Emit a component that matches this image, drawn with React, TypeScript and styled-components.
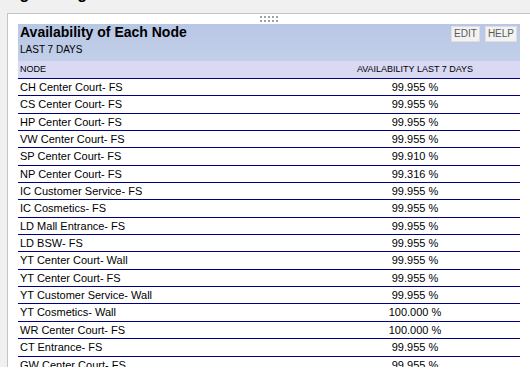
import React from "react";
import styled, { createGlobalStyle } from "styled-components";

// Availability report panel: one node per row with its 7 day availability

const GlobalStyle = createGlobalStyle`
  html, body {
    margin: 0;
    padding: 0;
    background: #fff;
    font-family: "Liberation Sans", Arial, sans-serif;
    overflow: hidden;
  }
`;

const rows: [string, string][] = [
  ["CH Center Court- FS", "99.955 %"],
  ["CS Center Court- FS", "99.955 %"],
  ["HP Center Court- FS", "99.955 %"],
  ["VW Center Court- FS", "99.955 %"],
  ["SP Center Court- FS", "99.910 %"],
  ["NP Center Court- FS", "99.316 %"],
  ["IC Customer Service- FS", "99.955 %"],
  ["IC Cosmetics- FS", "99.955 %"],
  ["LD Mall Entrance- FS", "99.955 %"],
  ["LD BSW- FS", "99.955 %"],
  ["YT Center Court- Wall", "99.955 %"],
  ["YT Center Court- FS", "99.955 %"],
  ["YT Customer Service- Wall", "99.955 %"],
  ["YT Cosmetics- Wall", "100.000 %"],
  ["WR Center Court- FS", "100.000 %"],
  ["CT Entrance- FS", "99.955 %"],
  ["GW Center Court- FS", "99.955 %"],
];

const App: React.FC = () => {
  return (
    <>
      <GlobalStyle />
      <Page>
        {/* page heading, scrolled mostly out of view */}
        <PageTitle>
          <span>Agent Logs</span>
        </PageTitle>
        <Panel>
          <Handle>
            {Array.from({ length: 10 }).map((_, i) => (
              <Dot key={i} />
            ))}
          </Handle>
          <Body>
            <Header>
              <div>
                <Title>Availability of Each Node</Title>
                <Subtitle>LAST 7 DAYS</Subtitle>
              </div>
              <Buttons>
                <SmallButton>EDIT</SmallButton>
                <SmallButton>HELP</SmallButton>
              </Buttons>
            </Header>
            <ColumnHeads>
              <span>NODE</span>
              <Center>AVAILABILITY LAST 7 DAYS</Center>
            </ColumnHeads>
            {rows.map(([node, value]) => (
              <Row key={node}>
                <span>{node}</span>
                <Center>{value}</Center>
              </Row>
            ))}
          </Body>
        </Panel>
      </Page>
    </>
  );
};

const Page = styled.div`
  height: 367px;
  padding-left: 7px;
  background: #f0f0f0;
  overflow: hidden;
`;

const PageTitle = styled.div`
  height: 13px;
  overflow: hidden;
  position: relative;
  font-size: 16px;
  font-weight: bold;
  color: #000;

  span {
    position: absolute;
    left: 1px;
    top: -14px;
    line-height: 16px;
    white-space: nowrap;
  }
`;

const Panel = styled.div`
  width: 522px;
  background: #fff;
  border: 1px solid #c4c4c4;
  border-bottom: none;
  height: 400px;
`;

const Handle = styled.div`
  display: grid;
  grid-template-columns: repeat(5, 2px);
  grid-auto-rows: 2px;
  column-gap: 2px;
  row-gap: 2px;
  justify-content: center;
  padding-top: 2px;
  height: 8px;
`;

const Dot = styled.i`
  background: #a0a0a0;
`;

const Body = styled.div`
  padding: 0 10px;
`;

const Header = styled.div`
  display: flex;
  justify-content: space-between;
  align-items: flex-start;
  background: linear-gradient(#b8c7e5, #c2cfe9);
  padding: 0 3px 4px 2px;
`;

const Title = styled.div`
  font-size: 14px;
  font-weight: bold;
  line-height: 16px;
  color: #000;
`;

const Subtitle = styled.div`
  font-size: 10px;
  line-height: 14px;
  margin-top: 3px;
  color: #000;
`;

const Buttons = styled.div`
  display: flex;
  gap: 5px;
  margin-top: 2px;
`;

const SmallButton = styled.span`
  display: block;
  font-size: 10px;
  line-height: 14px;
  padding: 0 2px;
  color: #5a5a5a;
  background: #f2f2f2;
  border: 1px solid #dedede;
`;

const ColumnHeads = styled.div`
  display: grid;
  grid-template-columns: 290px 1fr;
  background: #d9d9f3;
  font-size: 9px;
  line-height: 17px;
  padding-left: 2px;
  color: #000;
  border-bottom: 1px solid #000080;
`;

const Row = styled.div`
  display: grid;
  grid-template-columns: 290px 1fr;
  font-size: 11px;
  line-height: 16.34px;
  padding-left: 2px;
  color: #000;
  border-bottom: 1px solid #000080;
`;

const Center = styled.span`
  text-align: center;
`;

export default App;
